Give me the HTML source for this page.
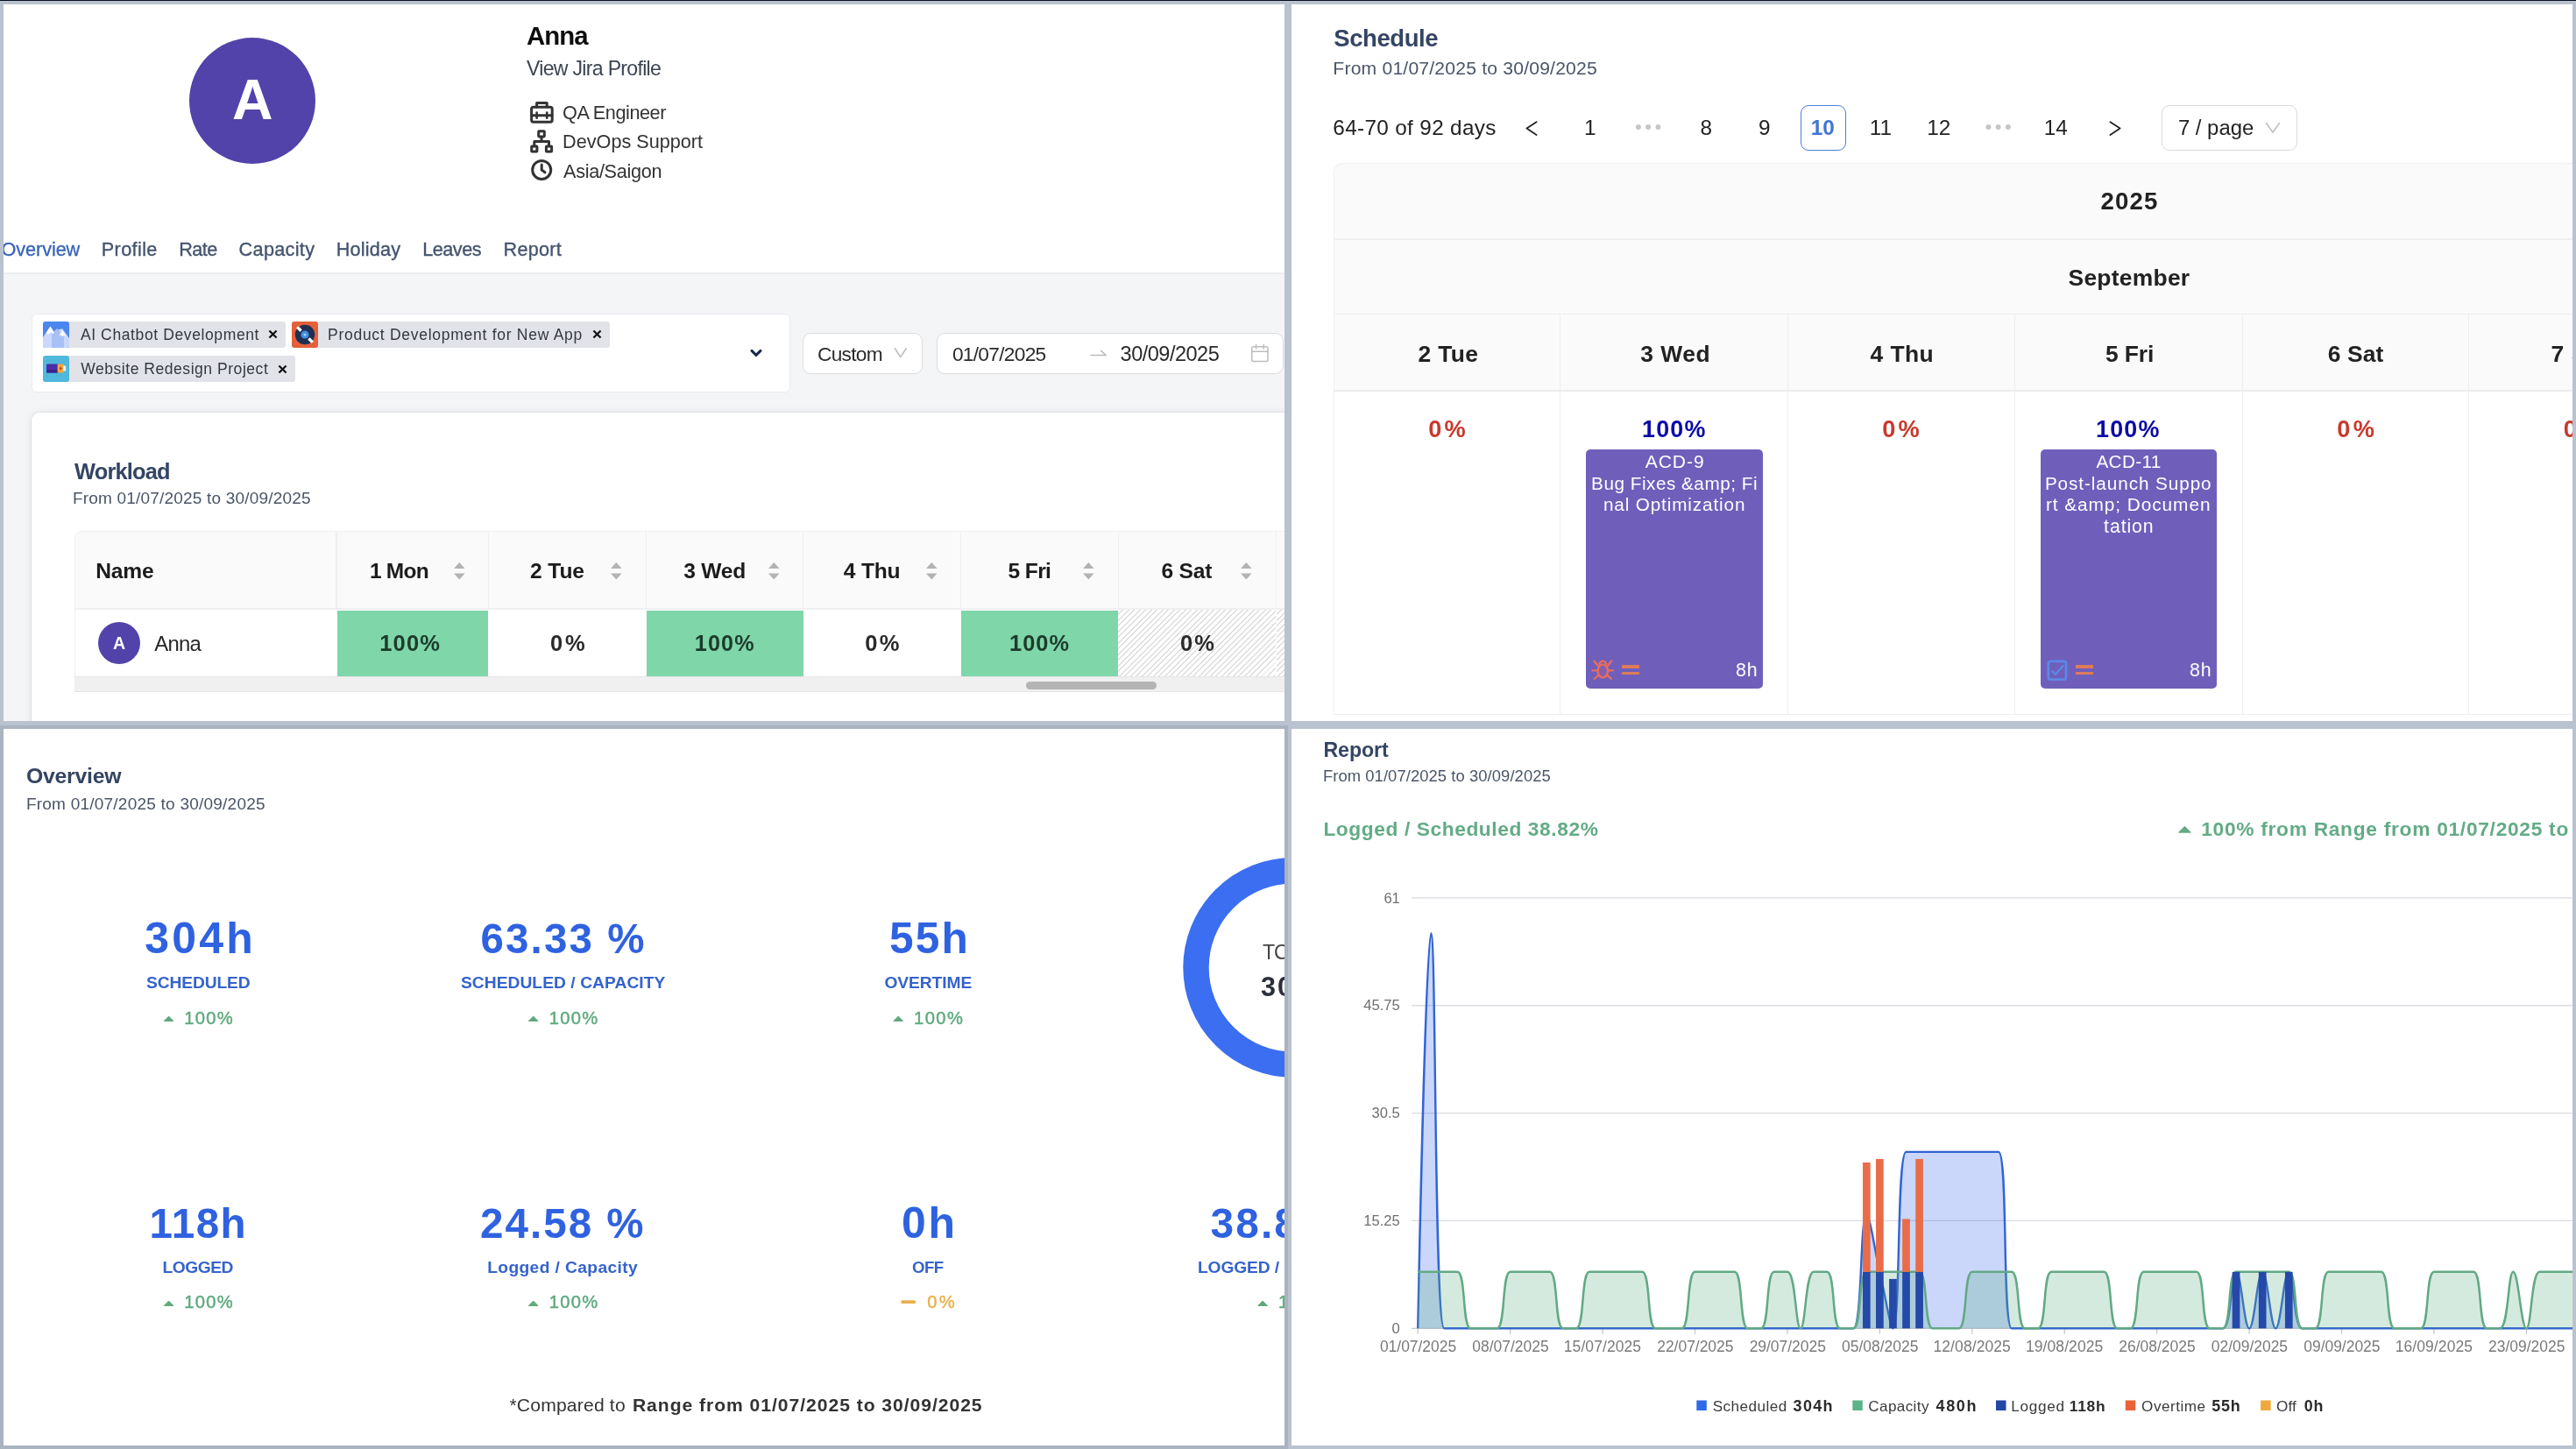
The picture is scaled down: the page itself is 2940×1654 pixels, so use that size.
<!DOCTYPE html>
<html lang="en">
<head>
<meta charset="utf-8">
<title>Anna - Resource Overview</title>
<style>
html,body{margin:0;padding:0}
body{width:2940px;height:1654px;overflow:hidden;background:#b9c2cf;position:relative;font-family:"Liberation Sans",sans-serif;-webkit-font-smoothing:antialiased}
.panel{position:absolute;overflow:hidden;background:#fff}
.g{position:absolute;will-change:transform}
.t{position:absolute;white-space:nowrap;line-height:1;margin:0;padding:0}
.b{font-weight:700}
.abs{position:absolute}
svg{position:absolute;overflow:visible}
</style>
</head>
<body>
<div class="abs" style="left:0;top:0;width:2940px;height:1px;background:#0b1020"></div>
<div class="abs" style="left:0;top:828px;width:1470px;height:826px;background:#aab3c0"></div>
<!-- ============ TOP-LEFT PANEL : profile + workload ============ -->
<div class="panel" style="left:4px;top:5px;width:1462px;height:818px">
<div class="g" style="left:-4px;top:-5px">
  <div class="abs" style="left:0;top:311px;width:1500px;height:520px;background:#f4f5f7"></div>
  <div class="abs" style="left:0;top:311px;width:1500px;height:2px;background:#ebedf0"></div>
  <!-- big avatar -->
  <div class="abs" style="left:216px;top:42.5px;width:144px;height:144px;border-radius:50%;background:#5243aa"></div>
  <!-- info icons -->
  <svg style="left:603px;top:113px" width="30" height="30" viewBox="0 0 30 30" fill="none" stroke="#333" stroke-width="3" stroke-linejoin="round" stroke-linecap="round">
    <rect x="3.6" y="9.2" width="23.6" height="17" rx="2.2"/>
    <path d="M9.6 9V4.6h11.6V9"/>
    <path d="M4 18.8h23"/>
    <path d="M9.6 15.6v6.2M21.2 15.6v6.2" stroke-width="2.6"/>
  </svg>
  <svg style="left:603px;top:146px" width="30" height="30" viewBox="0 0 30 30" fill="none" stroke="#333" stroke-width="3" stroke-linejoin="round">
    <rect x="11.7" y="3.7" width="6.6" height="6.2" rx=".6"/>
    <rect x="3.7" y="21" width="6.2" height="6" rx=".6"/>
    <rect x="20.4" y="21" width="6.2" height="6" rx=".6"/>
    <path d="M15 10v5.4M6.8 21v-5.6h16.7V21"/>
  </svg>
  <svg style="left:603px;top:179px" width="30" height="30" viewBox="0 0 30 30" fill="none" stroke="#333" stroke-width="3" stroke-linecap="round" stroke-linejoin="round">
    <circle cx="15.2" cy="14.9" r="10.5"/>
    <path d="M15.2 9v6l3.8 2.8"/>
  </svg>
  <!-- multi select -->
  <div class="abs" style="left:36px;top:358px;width:866px;height:90px;box-sizing:border-box;background:#fff;border:1.5px solid #e9ebee;border-radius:6px"></div>
  <!-- tag 1 -->
  <div class="abs" style="left:49px;top:366.5px;width:277px;height:30px;background:#e1e3e8;border-radius:3px"></div>
  <svg style="left:49px;top:366.5px" width="30" height="30" viewBox="0 0 30 30">
    <defs><clipPath id="c1"><rect width="30" height="30" rx="3"/></clipPath></defs>
    <g clip-path="url(#c1)">
      <rect width="30" height="30" fill="#4a86ee"/>
      <path d="M0 18L8 6l5 8 3-4 6-2 8 11v11H0z" fill="#c9d8fb"/>
      <path d="M10 30V14l6-6 8 8v14z" fill="#a9c0f7"/>
      <path d="M3.5 13.5L8.5 5.5l4.5 7-2 1.5-2.5-2-2 2.5z" fill="#fff"/>
      <path d="M18.5 16l3.5-6 4.2 6.5-2.4-.8-1.6 1.6-1.7-1.9z" fill="#fff"/>
    </g>
  </svg>
  <svg style="left:306.2px;top:376px" width="11" height="11" viewBox="0 0 11 11" stroke="#111" stroke-width="2.2" stroke-linecap="square"><path d="M2.2 2.2l6.600 6.600M8.800 2.200l-6.600 6.600"/></svg>
  <!-- tag 2 -->
  <div class="abs" style="left:332.5px;top:366.5px;width:363px;height:30px;background:#e1e3e8;border-radius:3px"></div>
  <svg style="left:332.5px;top:366.5px" width="30" height="30" viewBox="0 0 30 30">
    <rect width="30" height="30" rx="3" fill="#e5603a"/>
    <circle cx="15" cy="15" r="11.2" fill="#1f2f52"/>
    <circle cx="15" cy="15" r="4.6" fill="#3f8fe0"/>
    <circle cx="15" cy="15" r="1.6" fill="#9fd0ff"/>
    <g transform="rotate(45 15 15)" fill="#fff"><rect x="2.600" y="13.300" width="6.200" height="3.400" rx=".5"/><rect x="21.200" y="13.300" width="6.200" height="3.400" rx=".5"/></g>
  </svg>
  <svg style="left:676.2px;top:376px" width="11" height="11" viewBox="0 0 11 11" stroke="#111" stroke-width="2.2" stroke-linecap="square"><path d="M2.2 2.2l6.600 6.600M8.800 2.200l-6.600 6.600"/></svg>
  <!-- tag 3 -->
  <div class="abs" style="left:49px;top:406px;width:288px;height:30px;background:#e1e3e8;border-radius:3px"></div>
  <svg style="left:49px;top:406px" width="30" height="30" viewBox="0 0 30 30">
    <rect width="30" height="30" rx="3" fill="#4fb8dc"/>
    <rect x="4" y="9.6" width="13.6" height="10" rx="1.2" fill="#4a2ea8"/>
    <rect x="4" y="16" width="13.6" height="3.6" rx="1" fill="#3a2290"/>
    <rect x="16.6" y="9.6" width="7.4" height="10" rx="1.2" fill="#f0a83a"/>
    <rect x="23.2" y="11.6" width="3" height="6" rx="1" fill="#eef3f6"/>
    <path d="M20.3 12.6l1.6 2-1.6 2-1.6-2z" fill="#b5472e"/>
  </svg>
  <svg style="left:316.6px;top:415.6px" width="11" height="11" viewBox="0 0 11 11" stroke="#111" stroke-width="2.2" stroke-linecap="square"><path d="M2.2 2.2l6.600 6.600M8.800 2.200l-6.600 6.600"/></svg>
  <!-- select chevron -->
  <svg style="left:855px;top:397px" width="16" height="12" viewBox="0 0 16 12" fill="none" stroke="#172b4d" stroke-width="3" stroke-linecap="round" stroke-linejoin="round"><path d="M3 3.4l5 5 5-5"/></svg>
  <!-- custom select -->
  <div class="abs" style="left:916px;top:380px;width:136.5px;height:46.5px;box-sizing:border-box;background:#fff;border:1.5px solid #dcdcdc;border-radius:9px"></div>
  <svg style="left:1020px;top:396px" width="16" height="14" viewBox="0 0 16 14" fill="none" stroke="#bdbdbd" stroke-width="1.6" stroke-linecap="round" stroke-linejoin="round"><path d="M1.4 1.8L7.8 11.6 14.2 1.8"/></svg>
  <!-- date range -->
  <div class="abs" style="left:1068.5px;top:380px;width:396px;height:46.5px;box-sizing:border-box;background:#fff;border:1.5px solid #dcdcdc;border-radius:9px"></div>
  <svg style="left:1244px;top:397px" width="20" height="12" viewBox="0 0 20 12" fill="none" stroke="#bdbdbd" stroke-width="1.5" stroke-linecap="round" stroke-linejoin="round"><path d="M1 8.6h17.4L12.6 3.4"/></svg>
  <svg style="left:1427px;top:392px" width="22" height="22" viewBox="0 0 22 22" fill="none" stroke="#bdbdbd" stroke-width="1.5" stroke-linejoin="round" stroke-linecap="round"><rect x="1.8" y="3.8" width="18.2" height="16.6" rx="1.2"/><path d="M1.8 9.2h18.2M6.6 1.6v4.4M15.2 1.6v4.4"/></svg>
  <!-- workload card -->
  <div class="abs" style="left:36px;top:471px;width:1500px;height:420px;background:#fff;border-radius:9px;box-shadow:0 0 0 1px rgba(9,30,66,.05),0 1px 10px rgba(9,30,66,.10)"></div>
  <!-- table -->
  <div class="abs" style="left:84.5px;top:606px;width:1460px;height:89px;background:#fafafa;border-top:1px solid #f0f0f0;border-left:1px solid #f0f0f0;border-radius:9px 0 0 0;box-sizing:border-box"></div>
  <div class="abs" style="left:84.5px;top:694px;width:1460px;height:1.5px;background:#efefef"></div>
  <div class="abs" style="left:84.5px;top:695px;width:1px;height:94px;background:#f0f0f0"></div>
  <!-- header column separators -->
  <div class="abs" style="left:556.5px;top:607px;width:1px;height:88px;background:#f0f0f0"></div>
  <div class="abs" style="left:736.5px;top:607px;width:1px;height:88px;background:#f0f0f0"></div>
  <div class="abs" style="left:916px;top:607px;width:1px;height:88px;background:#f0f0f0"></div>
  <div class="abs" style="left:1096px;top:607px;width:1px;height:88px;background:#f0f0f0"></div>
  <div class="abs" style="left:1275.5px;top:607px;width:1px;height:88px;background:#f0f0f0"></div>
  <div class="abs" style="left:1455.5px;top:607px;width:1px;height:88px;background:#f0f0f0"></div>
  <!-- fixed column shadow -->
  <div class="abs" style="left:383.3px;top:607px;width:10px;height:88px;background:linear-gradient(90deg,rgba(5,5,5,.07),rgba(5,5,5,.015) 22%,rgba(5,5,5,0))"></div>
  <!-- body cells -->
  <div class="abs" style="left:385px;top:697px;width:172px;height:75px;background:#7fd6a9"></div>
  <div class="abs" style="left:738px;top:697px;width:178.5px;height:75px;background:#7fd6a9"></div>
  <div class="abs" style="left:1097px;top:697px;width:178.5px;height:75px;background:#7fd6a9"></div>
  <div class="abs" style="left:1276px;top:695.5px;width:180px;height:77px;background:repeating-linear-gradient(135deg,#fff 0,#fff 3.4px,#dedede 3.4px,#dedede 4.6px)"></div>
  <div class="abs" style="left:1456.5px;top:695.5px;width:40px;height:77px;background:repeating-linear-gradient(135deg,#fff 0,#fff 3.4px,#dedede 3.4px,#dedede 4.6px)"></div>
  <!-- row bottom + scrollbar -->
  <div class="abs" style="left:84.5px;top:772px;width:1460px;height:18px;background:#f0f0f0;border-top:1.5px solid #e6e6e6;border-bottom:1px solid #e4e4e4;box-sizing:border-box"></div>
  <div class="abs" style="left:1170.5px;top:778px;width:149px;height:9px;border-radius:5px;background:#b4b4b4"></div>
  <!-- small avatar -->
  <div class="abs" style="left:112px;top:710px;width:48px;height:48px;border-radius:50%;background:#5243aa"></div>
  <!-- sorters -->
  <svg style="left:517.7px;top:641.5px" width="13" height="20" fill="#b3b3b3"><path d="M0 7l6.3-7 6.3 7z"/><path d="M0 12.6l6.3 7 6.3-7z"/></svg>
  <svg style="left:697.2px;top:641.5px" width="13" height="20" fill="#b3b3b3"><path d="M0 7l6.3-7 6.3 7z"/><path d="M0 12.6l6.3 7 6.3-7z"/></svg>
  <svg style="left:876.8px;top:641.5px" width="13" height="20" fill="#b3b3b3"><path d="M0 7l6.3-7 6.3 7z"/><path d="M0 12.6l6.3 7 6.3-7z"/></svg>
  <svg style="left:1056.6px;top:641.5px" width="13" height="20" fill="#b3b3b3"><path d="M0 7l6.3-7 6.3 7z"/><path d="M0 12.6l6.3 7 6.3-7z"/></svg>
  <svg style="left:1236px;top:641.5px" width="13" height="20" fill="#b3b3b3"><path d="M0 7l6.3-7 6.3 7z"/><path d="M0 12.6l6.3 7 6.3-7z"/></svg>
  <svg style="left:1415.6px;top:641.5px" width="13" height="20" fill="#b3b3b3"><path d="M0 7l6.3-7 6.3 7z"/><path d="M0 12.6l6.3 7 6.3-7z"/></svg>
  <span class="t b" style="left:265.00px;top:82.21px;font-size:64.46px;color:#ffffff;">A</span>
  <span class="t b" style="left:601.00px;top:26.00px;font-size:29.35px;color:#0d0d0d;letter-spacing:-0.919px;">Anna</span>
  <span class="t" style="left:601.00px;top:67.02px;font-size:23.09px;color:#3b4453;letter-spacing:-0.697px;">View Jira Profile</span>
  <span class="t" style="left:642.10px;top:117.92px;font-size:21.66px;color:#333333;letter-spacing:-0.448px;">QA Engineer</span>
  <span class="t" style="left:642.10px;top:151.21px;font-size:21.66px;color:#333333;letter-spacing:-0.014px;">DevOps Support</span>
  <span class="t" style="left:643.10px;top:185.01px;font-size:21.66px;color:#333333;letter-spacing:-0.323px;">Asia/Saigon</span>
  <span class="t" style="left:1.60px;top:274.11px;font-size:21.66px;color:#3a66b8;letter-spacing:-0.088px;-webkit-text-stroke:0.35px #3a66b8;">Overview</span>
  <span class="t" style="left:115.80px;top:274.11px;font-size:21.66px;color:#44546f;letter-spacing:0.360px;-webkit-text-stroke:0.35px #44546f;">Profile</span>
  <span class="t" style="left:204.20px;top:274.11px;font-size:21.66px;color:#44546f;letter-spacing:-0.567px;-webkit-text-stroke:0.35px #44546f;">Rate</span>
  <span class="t" style="left:272.60px;top:274.11px;font-size:21.66px;color:#44546f;letter-spacing:0.310px;-webkit-text-stroke:0.35px #44546f;">Capacity</span>
  <span class="t" style="left:383.80px;top:274.11px;font-size:21.66px;color:#44546f;letter-spacing:0.184px;-webkit-text-stroke:0.35px #44546f;">Holiday</span>
  <span class="t" style="left:482.20px;top:274.11px;font-size:21.66px;color:#44546f;letter-spacing:-0.501px;-webkit-text-stroke:0.35px #44546f;">Leaves</span>
  <span class="t" style="left:574.50px;top:274.11px;font-size:21.66px;color:#44546f;letter-spacing:0.263px;-webkit-text-stroke:0.35px #44546f;">Report</span>
  <span class="t" style="left:91.90px;top:373.60px;font-size:17.54px;color:#33383f;letter-spacing:0.598px;">AI Chatbot Development</span>
  <span class="t" style="left:374.00px;top:373.60px;font-size:17.54px;color:#33383f;letter-spacing:0.711px;">Product Development for New App</span>
  <span class="t" style="left:92.20px;top:413.21px;font-size:17.54px;color:#33383f;letter-spacing:0.530px;">Website Redesign Project</span>
  <span class="t" style="left:933.04px;top:392.70px;font-size:22.68px;color:#2a2a2a;letter-spacing:-0.707px;">Custom</span>
  <span class="t" style="left:1086.90px;top:392.70px;font-size:22.72px;color:#2a2a2a;letter-spacing:-0.707px;">01/07/2025</span>
  <span class="t" style="left:1278.60px;top:392.71px;font-size:23.56px;color:#2a2a2a;letter-spacing:-0.517px;">30/09/2025</span>
  <span class="t b" style="left:85.00px;top:525.51px;font-size:25.39px;color:#344563;letter-spacing:-0.793px;">Workload</span>
  <span class="t" style="left:83.00px;top:559.01px;font-size:19.02px;color:#4a5567;letter-spacing:0.184px;">From 01/07/2025 to 30/09/2025</span>
  <span class="t b" style="left:109.30px;top:640.00px;font-size:24.62px;color:#1c1c1c;letter-spacing:-0.247px;">Name</span>
  <span class="t b" style="left:421.91px;top:640.01px;font-size:24.48px;color:#1c1c1c;letter-spacing:-0.739px;">1 Mon</span>
  <span class="t b" style="left:605.00px;top:640.00px;font-size:24.62px;color:#1c1c1c;letter-spacing:-0.115px;">2 Tue</span>
  <span class="t b" style="left:780.30px;top:640.00px;font-size:24.62px;color:#1c1c1c;letter-spacing:-0.273px;">3 Wed</span>
  <span class="t b" style="left:962.80px;top:640.00px;font-size:24.62px;color:#1c1c1c;letter-spacing:-0.197px;">4 Thu</span>
  <span class="t b" style="left:1150.60px;top:640.00px;font-size:24.62px;color:#1c1c1c;letter-spacing:-0.658px;">5 Fri</span>
  <span class="t b" style="left:1325.50px;top:640.00px;font-size:24.62px;color:#1c1c1c;letter-spacing:-0.231px;">6 Sat</span>
  <span class="t b" style="left:129.00px;top:724.60px;font-size:19.55px;color:#ffffff;">A</span>
  <span class="t" style="left:176.30px;top:722.91px;font-size:23.87px;color:#262626;letter-spacing:-0.745px;">Anna</span>
  <span class="t b" style="left:433.25px;top:721.90px;font-size:25.52px;color:#1d3b2c;letter-spacing:1.178px;">100%</span>
  <span class="t b" style="left:628.00px;top:721.90px;font-size:25.52px;color:#2a2a2a;letter-spacing:2.762px;">0%</span>
  <span class="t b" style="left:792.86px;top:721.91px;font-size:25.18px;color:#1d3b2c;letter-spacing:1.094px;">100%</span>
  <span class="t b" style="left:987.20px;top:721.90px;font-size:25.52px;color:#2a2a2a;letter-spacing:2.462px;">0%</span>
  <span class="t b" style="left:1151.96px;top:721.91px;font-size:25.38px;color:#1d3b2c;letter-spacing:1.094px;">100%</span>
  <span class="t b" style="left:1347.00px;top:721.90px;font-size:25.52px;color:#2a2a2a;letter-spacing:1.962px;">0%</span>
</div>
</div>
<!-- ============ TOP-RIGHT PANEL : schedule ============ -->
<div class="panel" style="left:1474px;top:5px;width:1462px;height:818px">
<div class="g" style="left:-1474px;top:-5px">
  <!-- pagination -->
  <svg style="left:1738px;top:136px" width="20" height="22" viewBox="0 0 20 22" fill="none" stroke="#222" stroke-width="1.8" stroke-linecap="round" stroke-linejoin="round"><path d="M15.6 3.2L4.4 10.6l11.2 7.4"/></svg>
  <svg style="left:2404px;top:136px" width="20" height="22" viewBox="0 0 20 22" fill="none" stroke="#222" stroke-width="1.8" stroke-linecap="round" stroke-linejoin="round"><path d="M4.4 3.2l11.2 7.4L4.4 18"/></svg>
  <svg style="left:1860px;top:140px" width="40" height="10" fill="#c6c6c6"><circle cx="9.9" cy="5.1" r="3"/><circle cx="21.1" cy="5.1" r="3"/><circle cx="32.4" cy="5.1" r="3"/></svg>
  <svg style="left:2260px;top:140px" width="40" height="10" fill="#c6c6c6"><circle cx="9.4" cy="5.1" r="3"/><circle cx="20.6" cy="5.1" r="3"/><circle cx="31.9" cy="5.1" r="3"/></svg>
  <div class="abs" style="left:2054.5px;top:119.5px;width:52px;height:52px;box-sizing:border-box;border:1.6px solid #4a7fd6;border-radius:9px;background:#fff"></div>
  <div class="abs" style="left:2467.4px;top:119.5px;width:154.4px;height:52px;box-sizing:border-box;border:1.6px solid #dadada;border-radius:9px;background:#fff"></div>
  <svg style="left:2585px;top:139px" width="18" height="14" viewBox="0 0 18 14" fill="none" stroke="#bdbdbd" stroke-width="1.6" stroke-linecap="round" stroke-linejoin="round"><path d="M1.6 1.6L9 12 16.4 1.6"/></svg>
  <!-- table -->
  <div class="abs" style="left:1522px;top:185.5px;width:1500px;height:261px;box-sizing:border-box;background:#fafafa;border-top:1px solid #f0f0f0;border-left:1px solid #f0f0f0;border-radius:10px 0 0 0"></div>
  <div class="abs" style="left:1522px;top:272.4px;width:1500px;height:1.2px;background:#efefef"></div>
  <div class="abs" style="left:1522px;top:358.2px;width:1500px;height:1.2px;background:#efefef"></div>
  <div class="abs" style="left:1522px;top:445.4px;width:1500px;height:1.2px;background:#ececec"></div>
  <div class="abs" style="left:1522px;top:814.8px;width:1500px;height:1.2px;background:#efefef"></div>
  <div class="abs" style="left:1522px;top:446px;width:1px;height:370px;background:#f0f0f0"></div>
  <div class="abs" style="left:1780.4px;top:359px;width:1.1px;height:456px;background:#eeeeee"></div>
  <div class="abs" style="left:2040.1px;top:359px;width:1.1px;height:456px;background:#eeeeee"></div>
  <div class="abs" style="left:2299.2px;top:359px;width:1.1px;height:456px;background:#eeeeee"></div>
  <div class="abs" style="left:2558.6px;top:359px;width:1.1px;height:456px;background:#eeeeee"></div>
  <div class="abs" style="left:2817.2px;top:359px;width:1.1px;height:456px;background:#eeeeee"></div>
  <!-- cards -->
  <div class="abs" style="left:1810px;top:513px;width:201.6px;height:273px;border-radius:5px;background:#6f5fbb"></div>
  <div class="abs" style="left:2329px;top:513px;width:201px;height:273px;border-radius:5px;background:#6f5fbb"></div>
  <!-- bug icon -->
  <svg style="left:1816px;top:752px" width="27" height="24" viewBox="0 0 27 24" fill="none" stroke="#ea6c5e" stroke-width="2.3" stroke-linecap="round" stroke-linejoin="round">
    <ellipse cx="13.3" cy="13.9" rx="5.7" ry="7.5" fill="rgba(234,108,94,0.18)"/>
    <path d="M9.3 5.7c.9-2.200 2.500-3.100 4-3.100s3.100.9 4 3.100"/>
    <path d="M8.400 8.900L3.400 2.500M18.200 8.900l5-6.400M7.600 13.300H1.400M19 13.300h6.200M8.700 18.300l-5.100 4.700M17.900 18.300l5.100 4.700"/>
  </svg>
  <div class="abs" style="left:1851px;top:759.4px;width:20.4px;height:3.2px;background:#dd7b5a"></div>
  <div class="abs" style="left:1851px;top:767.1px;width:20.4px;height:3.2px;background:#dd7b5a"></div>
  <!-- task icon -->
  <svg style="left:2335px;top:751.5px" width="26" height="26" viewBox="0 0 26 26" fill="none" stroke="#5b88e8" stroke-width="2.8" stroke-linecap="round" stroke-linejoin="round">
    <rect x="2.8" y="2.800" width="20.2" height="20.900" rx="2.4"/>
    <path d="M7.4 14.400l3.700 3.300 8.500-9.700" stroke-width="2.4"/>
  </svg>
  <div class="abs" style="left:2369px;top:759.4px;width:20.4px;height:3.2px;background:#dd7b5a"></div>
  <div class="abs" style="left:2369px;top:767.1px;width:20.4px;height:3.2px;background:#dd7b5a"></div>
  <span class="t b" style="left:1522.30px;top:29.91px;font-size:27.47px;color:#344563;letter-spacing:-0.406px;">Schedule</span>
  <span class="t" style="left:1521.30px;top:67.11px;font-size:21.13px;color:#4a5567;letter-spacing:0.196px;">From 01/07/2025 to 30/09/2025</span>
  <span class="t" style="left:1521.30px;top:133.90px;font-size:24.30px;color:#222222;letter-spacing:0.343px;">64-70 of 92 days</span>
  <span class="t" style="left:1807.90px;top:134.11px;font-size:24.30px;color:#222222;">1</span>
  <span class="t" style="left:1940.40px;top:134.11px;font-size:24.30px;color:#222222;">8</span>
  <span class="t" style="left:2007.00px;top:134.11px;font-size:24.30px;color:#222222;">9</span>
  <span class="t" style="left:2133.75px;top:134.11px;font-size:24.30px;color:#222222;">11</span>
  <span class="t" style="left:2199.24px;top:134.11px;font-size:24.30px;color:#222222;">12</span>
  <span class="t" style="left:2332.84px;top:134.11px;font-size:24.30px;color:#222222;">14</span>
  <span class="t b" style="left:2066.84px;top:134.11px;font-size:24.30px;color:#3f76d2;">10</span>
  <span class="t" style="left:2485.90px;top:134.11px;font-size:23.88px;color:#222222;letter-spacing:0.013px;">7 / page</span>
  <span class="t b" style="left:2397.45px;top:216.40px;font-size:27.64px;color:#222222;letter-spacing:1.189px;">2025</span>
  <span class="t b" style="left:2360.55px;top:303.71px;font-size:26.42px;color:#222222;letter-spacing:0.262px;">September</span>
  <span class="t b" style="left:1618.55px;top:390.60px;font-size:26.42px;color:#222222;letter-spacing:0.345px;">2 Tue</span>
  <span class="t b" style="left:1872.25px;top:390.60px;font-size:26.42px;color:#222222;letter-spacing:0.536px;">3 Wed</span>
  <span class="t b" style="left:2134.50px;top:390.60px;font-size:26.42px;color:#222222;letter-spacing:0.429px;">4 Thu</span>
  <span class="t b" style="left:2403.10px;top:390.60px;font-size:26.42px;color:#222222;letter-spacing:-0.157px;">5 Fri</span>
  <span class="t b" style="left:2656.85px;top:390.60px;font-size:26.42px;color:#222222;letter-spacing:0.095px;">6 Sat</span>
  <span class="t b" style="left:2911.60px;top:390.60px;font-size:26.42px;color:#222222;letter-spacing:0.559px;">7 Sun</span>
  <span class="t b" style="left:1630.20px;top:475.92px;font-size:27.18px;color:#c9392c;letter-spacing:3.290px;">0%</span>
  <span class="t b" style="left:1874.06px;top:476.90px;font-size:26.90px;color:#0b0ba8;letter-spacing:1.165px;">100%</span>
  <span class="t b" style="left:2148.20px;top:475.92px;font-size:27.18px;color:#c9392c;letter-spacing:3.290px;">0%</span>
  <span class="t b" style="left:2392.06px;top:476.90px;font-size:26.90px;color:#0b0ba8;letter-spacing:1.165px;">100%</span>
  <span class="t b" style="left:2667.30px;top:475.92px;font-size:27.18px;color:#c9392c;letter-spacing:3.290px;">0%</span>
  <span class="t b" style="left:2925.85px;top:475.92px;font-size:27.18px;color:#c9392c;letter-spacing:3.290px;">0%</span>
  <span class="t" style="left:1877.75px;top:516.00px;font-size:21.04px;color:#ffffff;letter-spacing:0.932px;">ACD-9</span>
  <span class="t" style="left:1816.10px;top:541.91px;font-size:20.71px;color:#ffffff;letter-spacing:0.515px;">Bug Fixes &amp;amp; Fi</span>
  <span class="t" style="left:1829.90px;top:566.41px;font-size:20.71px;color:#ffffff;letter-spacing:0.872px;">nal Optimization</span>
  <span class="t" style="left:1981.00px;top:755.12px;font-size:21.40px;color:#ffffff;letter-spacing:0.932px;">8h</span>
  <span class="t" style="left:2392.40px;top:517.00px;font-size:20.71px;color:#ffffff;letter-spacing:0.364px;">ACD-11</span>
  <span class="t" style="left:2333.90px;top:541.91px;font-size:20.71px;color:#ffffff;letter-spacing:0.923px;">Post-launch Suppo</span>
  <span class="t" style="left:2334.99px;top:566.41px;font-size:20.82px;color:#ffffff;letter-spacing:0.932px;">rt &amp;amp; Documen</span>
  <span class="t" style="left:2401.10px;top:590.11px;font-size:21.21px;color:#ffffff;letter-spacing:0.932px;">tation</span>
  <span class="t" style="left:2498.90px;top:755.12px;font-size:21.40px;color:#ffffff;letter-spacing:0.932px;">8h</span>
</div>
</div>
<!-- ============ BOTTOM-LEFT PANEL : overview ============ -->
<div class="panel" style="left:4px;top:832px;width:1462px;height:818px">
<div class="g" style="left:-4px;top:-832px">
  <svg style="left:0;top:0" width="1600" height="1654">
    <circle cx="1475.7" cy="1104.4" r="110.7" fill="none" stroke="#3b6ef0" stroke-width="29.4"/>
    <g fill="#5fa97d">
      <path id="tri" d="M187.2 1165.5l5.35-5.400 5.350 5.400z" stroke="#5fa97d" stroke-width="1" stroke-linejoin="round"/>
      <path d="M603.3 1165.5l5.35-5.400 5.350 5.400z" stroke="#5fa97d" stroke-width="1" stroke-linejoin="round"/>
      <path d="M1019.9 1165.5l5.35-5.400 5.350 5.400z" stroke="#5fa97d" stroke-width="1" stroke-linejoin="round"/>
      <path d="M187.2 1490.400l5.35-5.400 5.350 5.400z" stroke="#5fa97d" stroke-width="1" stroke-linejoin="round"/>
      <path d="M603.3 1490.400l5.35-5.400 5.350 5.400z" stroke="#5fa97d" stroke-width="1" stroke-linejoin="round"/>
      <path d="M1435.8 1490.400l5.35-5.400 5.350 5.400z" stroke="#5fa97d" stroke-width="1" stroke-linejoin="round"/>
    </g>
    <rect x="1028.3" y="1484.3" width="16.8" height="3.7" rx="1.6" fill="#e9b04c"/>
  </svg>
  <span class="t b" style="left:29.90px;top:874.32px;font-size:24.83px;color:#344563;letter-spacing:-0.258px;">Overview</span>
  <span class="t" style="left:29.90px;top:908.31px;font-size:19.02px;color:#4a5567;letter-spacing:0.224px;">From 01/07/2025 to 30/09/2025</span>
  <span class="t b" style="left:165.20px;top:1046.61px;font-size:49.93px;color:#2f62e0;letter-spacing:3.235px;">304h</span>
  <span class="t b" style="left:548.55px;top:1047.61px;font-size:47.55px;color:#2f62e0;letter-spacing:2.084px;">63.33 %</span>
  <span class="t b" style="left:1014.96px;top:1046.60px;font-size:49.62px;color:#2f62e0;letter-spacing:2.140px;">55h</span>
  <span class="t b" style="left:170.50px;top:1372.91px;font-size:47.55px;color:#2f62e0;letter-spacing:1.431px;">118h</span>
  <span class="t b" style="left:548.10px;top:1372.91px;font-size:47.55px;color:#2f62e0;letter-spacing:2.001px;">24.58 %</span>
  <span class="t b" style="left:1029.10px;top:1371.91px;font-size:49.93px;color:#2f62e0;letter-spacing:2.635px;">0h</span>
  <span class="t b" style="left:1381.49px;top:1372.91px;font-size:47.82px;color:#2f62e0;letter-spacing:2.140px;">38.82 %</span>
  <span class="t b" style="left:167.10px;top:1112.00px;font-size:19.23px;color:#3563cc;letter-spacing:-0.139px;">SCHEDULED</span>
  <span class="t b" style="left:525.90px;top:1112.00px;font-size:19.23px;color:#3563cc;letter-spacing:0.053px;">SCHEDULED / CAPACITY</span>
  <span class="t b" style="left:1009.40px;top:1112.00px;font-size:19.23px;color:#3563cc;letter-spacing:-0.079px;">OVERTIME</span>
  <span class="t b" style="left:185.60px;top:1436.91px;font-size:19.23px;color:#3563cc;letter-spacing:-0.481px;">LOGGED</span>
  <span class="t b" style="left:556.15px;top:1436.91px;font-size:19.23px;color:#3563cc;letter-spacing:0.379px;">Logged / Capacity</span>
  <span class="t b" style="left:1041.05px;top:1437.91px;font-size:18.62px;color:#3563cc;letter-spacing:-0.577px;">OFF</span>
  <span class="t b" style="left:1367.00px;top:1436.91px;font-size:19.23px;color:#3563cc;letter-spacing:-0.119px;">LOGGED / SCHEDULED</span>
  <span class="t" style="left:210.35px;top:1151.61px;font-size:20.19px;color:#5fa97d;letter-spacing:1.277px;-webkit-text-stroke:0.45px #5fa97d;">100%</span>
  <span class="t" style="left:626.65px;top:1151.61px;font-size:20.19px;color:#5fa97d;letter-spacing:1.277px;-webkit-text-stroke:0.45px #5fa97d;">100%</span>
  <span class="t" style="left:1042.95px;top:1151.61px;font-size:20.19px;color:#5fa97d;letter-spacing:1.477px;-webkit-text-stroke:0.45px #5fa97d;">100%</span>
  <span class="t" style="left:210.35px;top:1476.41px;font-size:20.19px;color:#5fa97d;letter-spacing:1.277px;-webkit-text-stroke:0.45px #5fa97d;">100%</span>
  <span class="t" style="left:626.65px;top:1476.41px;font-size:20.19px;color:#5fa97d;letter-spacing:1.277px;-webkit-text-stroke:0.45px #5fa97d;">100%</span>
  <span class="t" style="left:1058.30px;top:1476.41px;font-size:20.19px;color:#e9b04c;letter-spacing:2.327px;-webkit-text-stroke:0.45px #e9b04c;">0%</span>
  <span class="t" style="left:1458.95px;top:1476.41px;font-size:20.19px;color:#5fa97d;letter-spacing:1.277px;-webkit-text-stroke:0.45px #5fa97d;">100%</span>
  <span class="t" style="left:581.40px;top:1592.61px;font-size:21.13px;color:#333333;letter-spacing:0.174px;">*Compared to</span>
  <span class="t b" style="left:721.90px;top:1592.62px;font-size:21.14px;color:#333333;letter-spacing:0.951px;">Range from 01/07/2025 to 30/09/2025</span>
  <span class="t" style="left:1441.00px;top:1076.10px;font-size:23.23px;color:#444444;letter-spacing:-0.698px;">TOTAL</span>
  <span class="t b" style="left:1439.00px;top:1110.61px;font-size:30.51px;color:#2a2f3a;letter-spacing:2.104px;">304h</span>
</div>
</div>
<!-- ============ BOTTOM-RIGHT PANEL : report ============ -->
<div class="panel" style="left:1474px;top:832px;width:1462px;height:818px">
<div class="g" style="left:-1474px;top:-832px">
  <svg style="left:0;top:0" width="3100" height="1654">
    <path d="M1611 1024.90H3000" stroke="#d9dce2" stroke-width="1.3" fill="none"/>
    <path d="M1611 1147.75H3000" stroke="#d9dce2" stroke-width="1.3" fill="none"/>
    <path d="M1611 1270.60H3000" stroke="#d9dce2" stroke-width="1.3" fill="none"/>
    <path d="M1611 1393.45H3000" stroke="#d9dce2" stroke-width="1.3" fill="none"/>
    <path d="M1611 1516.30H3000" stroke="#c6c9cf" stroke-width="1.2" fill="none"/>
    <path d="M1618.20 1516.30v6.500" stroke="#c2c5ca" stroke-width="1.2" fill="none"/>
    <path d="M1723.63 1516.30v6.500" stroke="#c2c5ca" stroke-width="1.2" fill="none"/>
    <path d="M1829.07 1516.30v6.500" stroke="#c2c5ca" stroke-width="1.2" fill="none"/>
    <path d="M1934.50 1516.30v6.500" stroke="#c2c5ca" stroke-width="1.2" fill="none"/>
    <path d="M2039.94 1516.30v6.500" stroke="#c2c5ca" stroke-width="1.2" fill="none"/>
    <path d="M2145.37 1516.30v6.500" stroke="#c2c5ca" stroke-width="1.2" fill="none"/>
    <path d="M2250.80 1516.30v6.500" stroke="#c2c5ca" stroke-width="1.2" fill="none"/>
    <path d="M2356.24 1516.30v6.500" stroke="#c2c5ca" stroke-width="1.2" fill="none"/>
    <path d="M2461.67 1516.30v6.500" stroke="#c2c5ca" stroke-width="1.2" fill="none"/>
    <path d="M2567.11 1516.30v6.500" stroke="#c2c5ca" stroke-width="1.2" fill="none"/>
    <path d="M2672.54 1516.30v6.500" stroke="#c2c5ca" stroke-width="1.2" fill="none"/>
    <path d="M2777.97 1516.30v6.500" stroke="#c2c5ca" stroke-width="1.2" fill="none"/>
    <path d="M2883.41 1516.30v6.500" stroke="#c2c5ca" stroke-width="1.2" fill="none"/>
    <path d="M2988.84 1516.30v6.500" stroke="#c2c5ca" stroke-width="1.2" fill="none"/>
    <path d="M1618.20 1516.30C1618.20 1516.30 1627.24 1065.18 1633.26 1065.18C1639.29 1065.18 1636.66 1516.30 1648.32 1516.30L1663.39 1516.30L1678.45 1516.30L1693.51 1516.30L1708.57 1516.30L1723.63 1516.30L1738.70 1516.30L1753.76 1516.30L1768.82 1516.30L1783.88 1516.30L1798.94 1516.30L1814.01 1516.30L1829.07 1516.30L1844.13 1516.30L1859.19 1516.30L1874.25 1516.30L1889.32 1516.30L1904.38 1516.30L1919.44 1516.30L1934.50 1516.30L1949.56 1516.30L1964.63 1516.30L1979.69 1516.30L1994.75 1516.30L2009.81 1516.30L2024.87 1516.30L2039.94 1516.30L2055.00 1516.30L2070.06 1516.30L2085.12 1516.30L2100.18 1516.30L2115.25 1516.30C2126.04 1516.30 2122.33 1387.41 2130.31 1387.41C2134.38 1387.41 2139.35 1426.08 2145.37 1451.85C2151.39 1477.63 2157.46 1516.30 2160.43 1516.30C2169.51 1516.30 2164.28 1314.91 2175.49 1314.91L2190.56 1314.91L2205.62 1314.91L2220.68 1314.91L2235.74 1314.91L2250.80 1314.91L2265.87 1314.91L2280.93 1314.91C2292.14 1314.91 2284.78 1516.30 2295.99 1516.30L2311.05 1516.30L2326.11 1516.30L2341.18 1516.30L2356.24 1516.30L2371.30 1516.30L2386.36 1516.30L2401.42 1516.30L2416.49 1516.30L2431.55 1516.30L2446.61 1516.30L2461.67 1516.30L2476.73 1516.30L2491.80 1516.30L2506.86 1516.30L2521.92 1516.30L2536.98 1516.30C2546.80 1516.30 2546.02 1451.85 2552.04 1451.85C2558.07 1451.85 2561.08 1516.30 2567.11 1516.30C2573.13 1516.30 2576.14 1451.85 2582.17 1451.85C2588.19 1451.85 2591.21 1516.30 2597.23 1516.30C2603.25 1516.30 2606.27 1451.85 2612.29 1451.85C2618.32 1451.85 2617.54 1516.30 2627.35 1516.30L2642.42 1516.30L2657.48 1516.30L2672.54 1516.30L2687.60 1516.30L2702.66 1516.30L2717.73 1516.30L2732.79 1516.30L2747.85 1516.30L2762.91 1516.30L2777.97 1516.30L2793.04 1516.30L2808.10 1516.30L2823.16 1516.30L2838.22 1516.30L2853.28 1516.30L2868.35 1516.30L2883.41 1516.30L2898.47 1516.30L2913.53 1516.30L2928.59 1516.30L2943.66 1516.30L2958.72 1516.30L2973.78 1516.30L2988.84 1516.30L2988.84 1516.30L1618.20 1516.30Z" fill="rgba(63,112,238,0.28)" stroke="none"/>
    <path d="M1618.20 1516.30C1618.20 1516.30 1627.24 1065.18 1633.26 1065.18C1639.29 1065.18 1636.66 1516.30 1648.32 1516.30L1663.39 1516.30L1678.45 1516.30L1693.51 1516.30L1708.57 1516.30L1723.63 1516.30L1738.70 1516.30L1753.76 1516.30L1768.82 1516.30L1783.88 1516.30L1798.94 1516.30L1814.01 1516.30L1829.07 1516.30L1844.13 1516.30L1859.19 1516.30L1874.25 1516.30L1889.32 1516.30L1904.38 1516.30L1919.44 1516.30L1934.50 1516.30L1949.56 1516.30L1964.63 1516.30L1979.69 1516.30L1994.75 1516.30L2009.81 1516.30L2024.87 1516.30L2039.94 1516.30L2055.00 1516.30L2070.06 1516.30L2085.12 1516.30L2100.18 1516.30L2115.25 1516.30C2126.04 1516.30 2122.33 1387.41 2130.31 1387.41C2134.38 1387.41 2139.35 1426.08 2145.37 1451.85C2151.39 1477.63 2157.46 1516.30 2160.43 1516.30C2169.51 1516.30 2164.28 1314.91 2175.49 1314.91L2190.56 1314.91L2205.62 1314.91L2220.68 1314.91L2235.74 1314.91L2250.80 1314.91L2265.87 1314.91L2280.93 1314.91C2292.14 1314.91 2284.78 1516.30 2295.99 1516.30L2311.05 1516.30L2326.11 1516.30L2341.18 1516.30L2356.24 1516.30L2371.30 1516.30L2386.36 1516.30L2401.42 1516.30L2416.49 1516.30L2431.55 1516.30L2446.61 1516.30L2461.67 1516.30L2476.73 1516.30L2491.80 1516.30L2506.86 1516.30L2521.92 1516.30L2536.98 1516.30C2546.80 1516.30 2546.02 1451.85 2552.04 1451.85C2558.07 1451.85 2561.08 1516.30 2567.11 1516.30C2573.13 1516.30 2576.14 1451.85 2582.17 1451.85C2588.19 1451.85 2591.21 1516.30 2597.23 1516.30C2603.25 1516.30 2606.27 1451.85 2612.29 1451.85C2618.32 1451.85 2617.54 1516.30 2627.35 1516.30L2642.42 1516.30L2657.48 1516.30L2672.54 1516.30L2687.60 1516.30L2702.66 1516.30L2717.73 1516.30L2732.79 1516.30L2747.85 1516.30L2762.91 1516.30L2777.97 1516.30L2793.04 1516.30L2808.10 1516.30L2823.16 1516.30L2838.22 1516.30L2853.28 1516.30L2868.35 1516.30L2883.41 1516.30L2898.47 1516.30L2913.53 1516.30L2928.59 1516.30L2943.66 1516.30L2958.72 1516.30L2973.78 1516.30L2988.84 1516.30" fill="none" stroke="#3264d4" stroke-width="2.4" stroke-linejoin="round"/>
    <path d="M1618.20 1451.85L1633.26 1451.85L1648.32 1451.85L1663.39 1451.85C1673.20 1451.85 1668.63 1516.30 1678.45 1516.30L1693.51 1516.30L1708.57 1516.30C1718.39 1516.30 1713.82 1451.85 1723.63 1451.85L1738.70 1451.85L1753.76 1451.85L1768.82 1451.85C1778.64 1451.85 1774.07 1516.30 1783.88 1516.30L1798.94 1516.30C1808.76 1516.30 1804.19 1451.85 1814.01 1451.85L1829.07 1451.85L1844.13 1451.85L1859.19 1451.85L1874.25 1451.85C1884.07 1451.85 1879.50 1516.30 1889.32 1516.30L1904.38 1516.30L1919.44 1516.30C1929.26 1516.30 1924.69 1451.85 1934.50 1451.85L1949.56 1451.85L1964.63 1451.85L1979.69 1451.85C1989.50 1451.85 1984.93 1516.30 1994.75 1516.30L2009.81 1516.30C2019.63 1516.30 2015.06 1451.85 2024.87 1451.85L2039.94 1451.85C2049.75 1451.85 2048.97 1516.30 2055.00 1516.30C2061.02 1516.30 2060.24 1451.85 2070.06 1451.85L2085.12 1451.85C2094.94 1451.85 2090.37 1516.30 2100.18 1516.30L2115.25 1516.30C2125.06 1516.30 2120.49 1451.85 2130.31 1451.85L2145.37 1451.85L2160.43 1451.85L2175.49 1451.85L2190.56 1451.85C2200.37 1451.85 2195.80 1516.30 2205.62 1516.30L2220.68 1516.30L2235.74 1516.30C2245.56 1516.30 2240.99 1451.85 2250.80 1451.85L2265.87 1451.85L2280.93 1451.85L2295.99 1451.85C2305.81 1451.85 2301.24 1516.30 2311.05 1516.30L2326.11 1516.30C2335.93 1516.30 2331.36 1451.85 2341.18 1451.85L2356.24 1451.85L2371.30 1451.85L2386.36 1451.85L2401.42 1451.85C2411.24 1451.85 2406.67 1516.30 2416.49 1516.30L2431.55 1516.30C2441.36 1516.30 2436.79 1451.85 2446.61 1451.85L2461.67 1451.85L2476.73 1451.85L2491.80 1451.85L2506.86 1451.85C2516.67 1451.85 2512.10 1516.30 2521.92 1516.30L2536.98 1516.30C2546.80 1516.30 2542.23 1451.85 2552.04 1451.85L2567.11 1451.85L2582.17 1451.85L2597.23 1451.85L2612.29 1451.85C2622.11 1451.85 2617.54 1516.30 2627.35 1516.30L2642.42 1516.30C2652.23 1516.30 2647.66 1451.85 2657.48 1451.85L2672.54 1451.85L2687.60 1451.85L2702.66 1451.85L2717.73 1451.85C2727.54 1451.85 2722.97 1516.30 2732.79 1516.30L2747.85 1516.30L2762.91 1516.30C2772.73 1516.30 2768.16 1451.85 2777.97 1451.85L2793.04 1451.85L2808.10 1451.85L2823.16 1451.85C2832.98 1451.85 2828.41 1516.30 2838.22 1516.30L2853.28 1516.30C2863.10 1516.30 2862.32 1451.85 2868.35 1451.85C2874.37 1451.85 2877.38 1516.30 2883.41 1516.30C2889.43 1516.30 2888.65 1451.85 2898.47 1451.85L2913.53 1451.85L2928.59 1451.85L2943.66 1451.85L2958.72 1451.85C2968.53 1451.85 2963.96 1516.30 2973.78 1516.30L2988.84 1516.30L2988.84 1516.30L1618.20 1516.30Z" fill="rgba(88,172,128,0.25)" stroke="none"/>
    <path d="M1618.20 1451.85L1633.26 1451.85L1648.32 1451.85L1663.39 1451.85C1673.20 1451.85 1668.63 1516.30 1678.45 1516.30L1693.51 1516.30L1708.57 1516.30C1718.39 1516.30 1713.82 1451.85 1723.63 1451.85L1738.70 1451.85L1753.76 1451.85L1768.82 1451.85C1778.64 1451.85 1774.07 1516.30 1783.88 1516.30L1798.94 1516.30C1808.76 1516.30 1804.19 1451.85 1814.01 1451.85L1829.07 1451.85L1844.13 1451.85L1859.19 1451.85L1874.25 1451.85C1884.07 1451.85 1879.50 1516.30 1889.32 1516.30L1904.38 1516.30L1919.44 1516.30C1929.26 1516.30 1924.69 1451.85 1934.50 1451.85L1949.56 1451.85L1964.63 1451.85L1979.69 1451.85C1989.50 1451.85 1984.93 1516.30 1994.75 1516.30L2009.81 1516.30C2019.63 1516.30 2015.06 1451.85 2024.87 1451.85L2039.94 1451.85C2049.75 1451.85 2048.97 1516.30 2055.00 1516.30C2061.02 1516.30 2060.24 1451.85 2070.06 1451.85L2085.12 1451.85C2094.94 1451.85 2090.37 1516.30 2100.18 1516.30L2115.25 1516.30C2125.06 1516.30 2120.49 1451.85 2130.31 1451.85L2145.37 1451.85L2160.43 1451.85L2175.49 1451.85L2190.56 1451.85C2200.37 1451.85 2195.80 1516.30 2205.62 1516.30L2220.68 1516.30L2235.74 1516.30C2245.56 1516.30 2240.99 1451.85 2250.80 1451.85L2265.87 1451.85L2280.93 1451.85L2295.99 1451.85C2305.81 1451.85 2301.24 1516.30 2311.05 1516.30L2326.11 1516.30C2335.93 1516.30 2331.36 1451.85 2341.18 1451.85L2356.24 1451.85L2371.30 1451.85L2386.36 1451.85L2401.42 1451.85C2411.24 1451.85 2406.67 1516.30 2416.49 1516.30L2431.55 1516.30C2441.36 1516.30 2436.79 1451.85 2446.61 1451.85L2461.67 1451.85L2476.73 1451.85L2491.80 1451.85L2506.86 1451.85C2516.67 1451.85 2512.10 1516.30 2521.92 1516.30L2536.98 1516.30C2546.80 1516.30 2542.23 1451.85 2552.04 1451.85L2567.11 1451.85L2582.17 1451.85L2597.23 1451.85L2612.29 1451.85C2622.11 1451.85 2617.54 1516.30 2627.35 1516.30L2642.42 1516.30C2652.23 1516.30 2647.66 1451.85 2657.48 1451.85L2672.54 1451.85L2687.60 1451.85L2702.66 1451.85L2717.73 1451.85C2727.54 1451.85 2722.97 1516.30 2732.79 1516.30L2747.85 1516.30L2762.91 1516.30C2772.73 1516.30 2768.16 1451.85 2777.97 1451.85L2793.04 1451.85L2808.10 1451.85L2823.16 1451.85C2832.98 1451.85 2828.41 1516.30 2838.22 1516.30L2853.28 1516.30C2863.10 1516.30 2862.32 1451.85 2868.35 1451.85C2874.37 1451.85 2877.38 1516.30 2883.41 1516.30C2889.43 1516.30 2888.65 1451.85 2898.47 1451.85L2913.53 1451.85L2928.59 1451.85L2943.66 1451.85L2958.72 1451.85C2968.53 1451.85 2963.96 1516.30 2973.78 1516.30L2988.84 1516.30" fill="none" stroke="#62a985" stroke-width="2.5" stroke-linejoin="round"/>
    <rect x="2125.96" y="1451.85" width="8.70" height="64.45" fill="#2549a8"/>
    <rect x="2141.02" y="1451.85" width="8.70" height="64.45" fill="#2549a8"/>
    <rect x="2156.08" y="1459.91" width="8.70" height="56.39" fill="#2549a8"/>
    <rect x="2171.14" y="1451.85" width="8.70" height="64.45" fill="#2549a8"/>
    <rect x="2186.21" y="1451.85" width="8.70" height="64.45" fill="#2549a8"/>
    <rect x="2547.69" y="1451.85" width="8.70" height="64.45" fill="#2549a8"/>
    <rect x="2577.82" y="1451.85" width="8.70" height="64.45" fill="#2549a8"/>
    <rect x="2607.94" y="1451.85" width="8.70" height="64.45" fill="#2549a8"/>
    <rect x="2125.96" y="1326.99" width="8.70" height="124.86" fill="#e96c48"/>
    <rect x="2141.02" y="1322.96" width="8.70" height="128.89" fill="#e96c48"/>
    <rect x="2171.14" y="1391.44" width="8.70" height="60.42" fill="#e96c48"/>
    <rect x="2186.21" y="1322.96" width="8.70" height="128.89" fill="#e96c48"/>
  </svg>
  <svg style="left:0;top:0" width="2940" height="1654">
    <path d="M2486.8 950.1l6.600-6.500 6.600 6.500z" fill="#63ab85" stroke="#63ab85" stroke-width="1.2" stroke-linejoin="round"/>
    <rect x="1936.300" y="1598.500" width="11.500" height="11.500" fill="#2f6be8"/>
    <rect x="2114.300" y="1598.500" width="11.500" height="11.500" fill="#5db389"/>
    <rect x="2278.000" y="1598.500" width="11.500" height="11.500" fill="#2347a5"/>
    <rect x="2425.800" y="1598.500" width="11.500" height="11.500" fill="#e8623a"/>
    <rect x="2580.100" y="1598.500" width="11.500" height="11.500" fill="#f0a93b"/>
  </svg>
  <span class="t b" style="left:1510.40px;top:845.31px;font-size:23.14px;color:#344563;letter-spacing:-0.022px;">Report</span>
  <span class="t" style="left:1509.90px;top:877.31px;font-size:18.39px;color:#4a5567;letter-spacing:0.085px;">From 01/07/2025 to 30/09/2025</span>
  <span class="t b" style="left:1510.40px;top:934.70px;font-size:22.72px;color:#63ab85;letter-spacing:0.596px;">Logged / Scheduled 38.82%</span>
  <span class="t b" style="left:2512.20px;top:935.11px;font-size:22.72px;color:#63ab85;letter-spacing:0.723px;">100% from Range from 01/07/2025 to 30/09/2025</span>
  <span class="t" style="left:1579.38px;top:1017.61px;font-size:16.59px;color:#6f6f6f;">61</span>
  <span class="t" style="left:1556.33px;top:1140.45px;font-size:16.59px;color:#6f6f6f;">45.75</span>
  <span class="t" style="left:1565.55px;top:1263.31px;font-size:16.59px;color:#6f6f6f;">30.5</span>
  <span class="t" style="left:1556.33px;top:1386.15px;font-size:16.59px;color:#6f6f6f;">15.25</span>
  <span class="t" style="left:1588.60px;top:1509.00px;font-size:16.59px;color:#6f6f6f;">0</span>
  <span class="t" style="left:1574.90px;top:1529.11px;font-size:17.44px;color:#7a7a7a;">01/07/2025</span>
  <span class="t" style="left:1680.33px;top:1529.11px;font-size:17.44px;color:#7a7a7a;">08/07/2025</span>
  <span class="t" style="left:1784.77px;top:1529.11px;font-size:17.44px;color:#7a7a7a;letter-spacing:0.114px;">15/07/2025</span>
  <span class="t" style="left:1891.20px;top:1529.11px;font-size:17.44px;color:#7a7a7a;">22/07/2025</span>
  <span class="t" style="left:1996.64px;top:1529.11px;font-size:17.44px;color:#7a7a7a;">29/07/2025</span>
  <span class="t" style="left:2102.07px;top:1529.11px;font-size:17.44px;color:#7a7a7a;">05/08/2025</span>
  <span class="t" style="left:2206.50px;top:1529.11px;font-size:17.44px;color:#7a7a7a;letter-spacing:0.114px;">12/08/2025</span>
  <span class="t" style="left:2311.94px;top:1529.11px;font-size:17.44px;color:#7a7a7a;letter-spacing:0.114px;">19/08/2025</span>
  <span class="t" style="left:2418.37px;top:1529.11px;font-size:17.44px;color:#7a7a7a;">26/08/2025</span>
  <span class="t" style="left:2523.81px;top:1529.11px;font-size:17.44px;color:#7a7a7a;">02/09/2025</span>
  <span class="t" style="left:2629.24px;top:1529.11px;font-size:17.44px;color:#7a7a7a;">09/09/2025</span>
  <span class="t" style="left:2733.67px;top:1529.11px;font-size:17.44px;color:#7a7a7a;letter-spacing:0.114px;">16/09/2025</span>
  <span class="t" style="left:2840.11px;top:1529.11px;font-size:17.44px;color:#7a7a7a;">23/09/2025</span>
  <span class="t" style="left:1954.70px;top:1596.60px;font-size:17.12px;color:#3a3a3a;letter-spacing:0.469px;">Scheduled</span>
  <span class="t b" style="left:2046.60px;top:1595.60px;font-size:17.98px;color:#2b2b2b;letter-spacing:1.309px;">304h</span>
  <span class="t" style="left:2132.30px;top:1596.60px;font-size:17.12px;color:#3a3a3a;letter-spacing:0.370px;">Capacity</span>
  <span class="t b" style="left:2209.60px;top:1595.60px;font-size:17.98px;color:#2b2b2b;letter-spacing:1.642px;">480h</span>
  <span class="t" style="left:2295.30px;top:1596.60px;font-size:17.12px;color:#3a3a3a;letter-spacing:0.745px;">Logged</span>
  <span class="t b" style="left:2361.68px;top:1596.60px;font-size:17.39px;color:#2b2b2b;letter-spacing:0.770px;">118h</span>
  <span class="t" style="left:2444.10px;top:1596.60px;font-size:17.12px;color:#3a3a3a;letter-spacing:0.502px;">Overtime</span>
  <span class="t b" style="left:2524.20px;top:1596.61px;font-size:17.96px;color:#2b2b2b;letter-spacing:0.770px;">55h</span>
  <span class="t" style="left:2598.10px;top:1596.60px;font-size:17.12px;color:#3a3a3a;letter-spacing:0.124px;">Off</span>
  <span class="t b" style="left:2629.80px;top:1596.61px;font-size:17.83px;color:#2b2b2b;letter-spacing:0.770px;">0h</span>
</div>
</div>
</body>
</html>
